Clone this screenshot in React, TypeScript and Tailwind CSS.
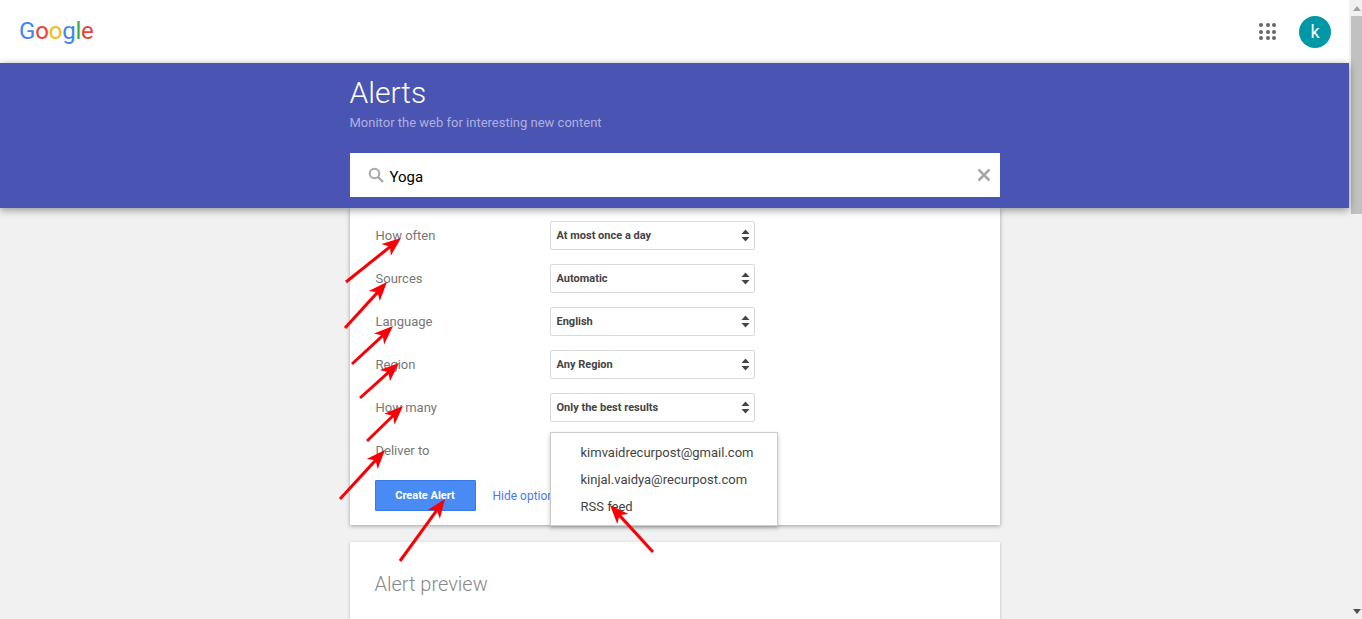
const roboto = 'font-[Roboto,"Liberation_Sans",sans-serif]'

const rows = [
  { label: 'How often', value: 'At most once a day' },
  { label: 'Sources', value: 'Automatic' },
  { label: 'Language', value: 'English' },
  { label: 'Region', value: 'Any Region' },
  { label: 'How many', value: 'Only the best results' },
  { label: 'Deliver to', value: '' },
]

// tail x, tail y, tip x, tip y
const arrows = [
  [346, 282, 401, 238],
  [345, 328, 387, 282],
  [352, 364, 393, 326],
  [360, 398, 399, 363],
  [367, 441, 403, 406],
  [340, 499, 385, 450],
  [400, 561, 445, 499],
  [653, 552, 610, 505],
]

function Arrow({ a }: { a: number[] }) {
  const [x1, y1, x2, y2] = a
  const len = Math.hypot(x2 - x1, y2 - y1)
  const ux = (x2 - x1) / len
  const uy = (y2 - y1) / len
  const px = -uy
  const py = ux
  const at = (back: number, side: number) =>
    `${x2 - ux * back + px * side},${y2 - uy * back + py * side}`
  return (
    <g>
      <line x1={x1} y1={y1} x2={x2 - ux * 10} y2={y2 - uy * 10} stroke="#fa0006" strokeWidth="3" />
      <polygon points={`${at(0, 0)} ${at(19, 7.5)} ${at(14, 0)} ${at(19, -7.5)}`} fill="#fa0006" />
    </g>
  )
}

function Carets() {
  return (
    <svg width="9" height="13" viewBox="0 0 9 13" className="shrink-0">
      <path d="M4.5 0.5 L8.5 5 H0.5 Z M0.5 8 H8.5 L4.5 12.5 Z" fill="#444" />
    </svg>
  )
}

function Row({ label, value }: { label: string; value: string }) {
  return (
    <div className="flex h-[29px] items-center">
      <div className="w-[175px] pl-[1px] text-[13px] text-[#777]">{label}</div>
      {value && (
        <div className="flex h-[29px] w-[205px] items-center justify-between rounded-[2px] border border-[#d9d9d9] bg-white pr-[4px] pl-[6px] text-[11px] font-bold text-[#444]">
          <span className="pt-[1px]">{value}</span>
          <Carets />
        </div>
      )}
    </div>
  )
}

export default function App() {
  return (
    <div className={`relative flex h-[619px] overflow-hidden bg-[#f1f1f1] ${roboto}`}>
      <div className="min-w-0 flex-1">
        <div className="flex h-[63px] items-center justify-between bg-white pr-[18px] pl-[19px]">
          <div className="pb-[2px] text-[24px] leading-none tracking-[-0.2px]">
            <span className="text-[#4285f4]">G</span>
            <span className="text-[#ea4335]">o</span>
            <span className="text-[#fbbc05]">o</span>
            <span className="text-[#4285f4]">g</span>
            <span className="text-[#34a853]">l</span>
            <span className="text-[#ea4335]">e</span>
          </div>
          <div className="flex items-center gap-[23px]">
            <div className="grid grid-cols-3 gap-[2.5px]">
              {Array.from({ length: 9 }).map((_, i) => (
                <span key={i} className="h-[4px] w-[4px] rounded-full bg-[#666]" />
              ))}
            </div>
            <div className="flex h-[32px] w-[32px] items-center justify-center rounded-full bg-[#0097a7] text-[18px] text-white">
              k
            </div>
          </div>
        </div>

        <div className="relative z-10 h-[145px] bg-[#4a54b3] shadow-[0_2px_8px_rgba(0,0,0,0.4)]">
          <div className="mx-auto w-[650px] pt-[11px]">
            <h1 className="text-[30px] leading-[38px] font-light text-white">Alerts</h1>
            <p className="mt-[3px] text-[13px] leading-[16px] text-[#adb1e0]">
              Monitor the web for interesting new content
            </p>
            <div className="mt-[22px] flex h-[44px] items-center bg-white pr-[9px] pl-[18px]">
              <svg width="16" height="16" viewBox="0 0 16 16" fill="none" stroke="#a8a8a8" strokeWidth="2">
                <circle cx="6.5" cy="6.5" r="4.8" />
                <path d="M10 10 L15 15" strokeWidth="2.4" />
              </svg>
              <span className="ml-[6px] flex-1 pt-[4px] text-[15px] text-black">Yoga</span>
              <svg width="14" height="14" viewBox="0 0 14 14" stroke="#a8a8a8" strokeWidth="2.6">
                <path d="M1.5 1.5 L12.5 12.5 M12.5 1.5 L1.5 12.5" />
              </svg>
            </div>
          </div>
        </div>

        <div className="mx-auto w-[650px]">
          <div className="relative h-[317px] bg-white px-[25px] pt-[13px] shadow-[0_1px_4px_rgba(0,0,0,0.35)]">
            <div className="flex flex-col gap-[14px]">
              {rows.map((r) => (
                <Row key={r.label} label={r.label} value={r.value} />
              ))}
            </div>
            <div className="mt-[15px] flex items-center">
              <div className="flex h-[31px] w-[101px] items-center justify-center rounded-[1px] border border-[#3b78e7] bg-[#4a8af4] pt-[1px] text-[11px] font-bold text-white">
                Create Alert
              </div>
              <span className="ml-[17px] text-[12px] text-[#4d79e8]">Hide options</span>
            </div>
            <div className="absolute top-[224px] left-[200px] flex h-[94px] w-[228px] flex-col gap-[10px] border border-[#ccc] bg-white pt-[11px] pl-[30px] text-[13px] leading-[17px] text-[#444] shadow-[0_2px_4px_rgba(0,0,0,0.25)]">
              <div>kimvaidrecurpost@gmail.com</div>
              <div>kinjal.vaidya@recurpost.com</div>
              <div>RSS feed</div>
            </div>
          </div>
          <div className="mt-[17px] h-[120px] bg-white px-[25px] pt-[30px] shadow-[0_1px_3px_rgba(0,0,0,0.25)]">
            <h2 className="text-[20px] leading-[24px] font-light text-[#888]">Alert preview</h2>
          </div>
        </div>
      </div>

      <div className="flex w-[13px] shrink-0 flex-col items-end bg-[#f1f1f1]">
        <div className="flex h-[16px] w-[11px] items-center justify-center">
          <svg width="8" height="5" viewBox="0 0 8 5">
            <path d="M4 0 L8 5 H0 Z" fill="#a3a3a3" />
          </svg>
        </div>
        <div className="h-[198px] w-[11px] bg-[#c1c1c1]" />
        <div className="flex-1" />
        <div className="flex h-[16px] w-[11px] items-center justify-center">
          <svg width="8" height="5" viewBox="0 0 8 5">
            <path d="M4 5 L8 0 H0 Z" fill="#505050" />
          </svg>
        </div>
      </div>

      <svg className="pointer-events-none absolute top-0 left-0 z-20" width="1362" height="619">
        {arrows.map((a, i) => (
          <Arrow key={i} a={a} />
        ))}
      </svg>
    </div>
  )
}
